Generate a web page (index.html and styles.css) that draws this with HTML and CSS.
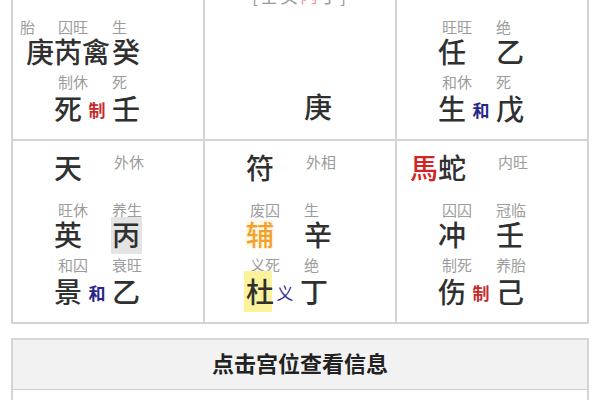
FILE: index.html
```html
<!DOCTYPE html>
<html lang="zh-CN">
<head>
<meta charset="utf-8">
<title>奇门盘</title>
<link rel="stylesheet" href="styles.css">
</head>
<body>
<div class="board">
  <!-- top-left -->
  <div class="cell">
    <div class="god-row"><span class="pre"></span><span class="a"></span></div>
    <div class="lbl-row"><span class="pre">胎</span><span class="la">囚旺</span><span class="lb">生</span></div>
    <div class="big-row"><span class="pre">庚</span><span class="a">芮</span><span class="mid big">禽</span><span class="b">癸</span></div>
    <div class="lbl-row"><span class="pre"></span><span class="la">制休</span><span class="lb">死</span></div>
    <div class="big-row"><span class="pre"></span><span class="a">死</span><span class="mid red">制</span><span class="b">壬</span></div>
  </div>
  <!-- top-center -->
  <div class="cell center">
    <div class="stems">[壬癸<span class="pink">丙</span>丁]</div>
    <div class="big-row last"><span class="pre"></span><span class="a"></span><span class="mid"></span><span class="b">庚</span></div>
  </div>
  <!-- top-right -->
  <div class="cell">
    <div class="god-row"><span class="pre"></span><span class="a"></span></div>
    <div class="lbl-row"><span class="pre"></span><span class="la">旺旺</span><span class="lb">绝</span></div>
    <div class="big-row"><span class="pre"></span><span class="a">任</span><span class="mid"></span><span class="b">乙</span></div>
    <div class="lbl-row"><span class="pre"></span><span class="la">和休</span><span class="lb">死</span></div>
    <div class="big-row"><span class="pre"></span><span class="a">生</span><span class="mid blue">和</span><span class="b">戊</span></div>
  </div>
  <!-- bottom-left -->
  <div class="cell">
    <div class="god-row"><span class="pre"></span><span class="a">天</span><span class="tag">外休</span></div>
    <div class="lbl-row"><span class="pre"></span><span class="la">旺休</span><span class="lb">养生</span></div>
    <div class="big-row"><span class="pre"></span><span class="a">英</span><span class="mid"></span><span class="b hl-gray">丙</span></div>
    <div class="lbl-row"><span class="pre"></span><span class="la">和囚</span><span class="lb">衰旺</span></div>
    <div class="big-row"><span class="pre"></span><span class="a">景</span><span class="mid blue">和</span><span class="b">乙</span></div>
  </div>
  <!-- bottom-center -->
  <div class="cell">
    <div class="god-row"><span class="pre"></span><span class="a">符</span><span class="tag">外相</span></div>
    <div class="lbl-row"><span class="pre"></span><span class="la">废囚</span><span class="lb">生</span></div>
    <div class="big-row"><span class="pre"></span><span class="a orange">辅</span><span class="mid"></span><span class="b">辛</span></div>
    <div class="lbl-row"><span class="pre"></span><span class="la">义死</span><span class="lb">绝</span></div>
    <div class="big-row"><span class="pre"></span><span class="a hl-yellow">杜</span><span class="mid navy">义</span><span class="b">丁</span></div>
  </div>
  <!-- bottom-right -->
  <div class="cell">
    <div class="god-row"><span class="pre horse">馬</span><span class="a">蛇</span><span class="tag">内旺</span></div>
    <div class="lbl-row"><span class="pre"></span><span class="la">囚囚</span><span class="lb">冠临</span></div>
    <div class="big-row"><span class="pre"></span><span class="a">冲</span><span class="mid"></span><span class="b">壬</span></div>
    <div class="lbl-row"><span class="pre"></span><span class="la">制死</span><span class="lb">养胎</span></div>
    <div class="big-row"><span class="pre"></span><span class="a">伤</span><span class="mid red">制</span><span class="b">己</span></div>
  </div>
</div>

<div class="panel">
  <div class="panel-head">点击宫位查看信息</div>
  <div class="panel-body"></div>
</div>
</body>
</html>
```

FILE: styles.css
```css
* { box-sizing: border-box; }

html, body {
  margin: 0;
  padding: 0;
  background: #ffffff;
}

body {
  font-family: "Noto Sans CJK SC", "Noto Sans", sans-serif;
  color: #333333;
  overflow: hidden;
}

.board {
  margin: -44px 11px 0 11px;
  display: grid;
  grid-template-columns: repeat(3, 1fr);
  border-top: 2px solid #d3d3d3;
  border-left: 2px solid #d3d3d3;
}

.cell {
  height: 183px;
  border-right: 2px solid #d3d3d3;
  border-bottom: 2px solid #d3d3d3;
  padding-top: 12px;
  display: flex;
  flex-direction: column;
}

/* rows */
.god-row,
.big-row {
  display: flex;
  align-items: flex-start;
  height: 28px;
  font-size: 28px;
  line-height: 28px;
  font-weight: 500;
  color: #303030;
}

.lbl-row {
  display: flex;
  align-items: flex-start;
  height: 16px;
  font-size: 15px;
  line-height: 16px;
  color: #9c9c9c;
}

.god-row + .lbl-row { margin-top: 21px; }
.lbl-row + .big-row { margin-top: 2px; }
.big-row + .lbl-row { margin-top: 9px; }
.lbl-row + .big-row:last-child { margin-top: 4px; }

.god-row .pre,
.big-row .pre {
  width: 41px;
  flex: none;
  text-align: right;
}

.god-row .a,
.big-row .a {
  width: 28px;
  flex: none;
}

.big-row .mid {
  width: 30px;
  flex: none;
  text-align: center;
  font-size: 17px;
  line-height: 28px;
  padding-top: 2px;
}

.big-row .mid.big {
  font-size: 28px;
  padding-top: 0;
  text-align: left;
}

.big-row .b { flex: none; }

.god-row .tag {
  margin-left: 32px;
  margin-top: 1px;
  font-size: 15px;
  line-height: 16px;
  font-weight: 400;
  color: #9c9c9c;
}

.lbl-row .pre {
  width: 45px;
  flex: none;
  padding-left: 7px;
}

.lbl-row .la {
  width: 54px;
  flex: none;
}

/* colours */
.red { color: #c42b2b; font-weight: 700; }
.blue { color: #26268a; font-weight: 700; }
.navy { color: #2e2e96; font-weight: 400; }
.horse { color: #d42323; }
.orange {
  color: #f2a22a;
  background: #fff9ea;
}
.pink { color: #e9a3a3; }

.hl-gray {
  background: #e4e4e4;
  padding: 3px 2px 6px 1px;
  margin: -3px -2px -6px -1px;
}

.hl-yellow {
  background: #fbf39c;
  padding: 6px 2px 7px 2px;
  margin: -6px -2px -7px -2px;
}

/* center palace */
.center .stems {
  margin-top: 16px;
  text-align: center;
  font-size: 18px;
  line-height: 18px;
  letter-spacing: 2px;
  color: #9a9a9a;
}

.center .big-row.last {
  margin-top: 88px;
}

/* info panel */
.panel {
  margin: 14px 11px 0 11px;
  border: 2px solid #d6d6d6;
}

.panel-head {
  height: 50px;
  background: #f2f2f2;
  border-bottom: 1px solid #cfcfcf;
  text-align: center;
  font-size: 22px;
  font-weight: 700;
  line-height: 44px;
  color: #222222;
}

.panel-body {
  height: 40px;
  background: #ffffff;
}
```
